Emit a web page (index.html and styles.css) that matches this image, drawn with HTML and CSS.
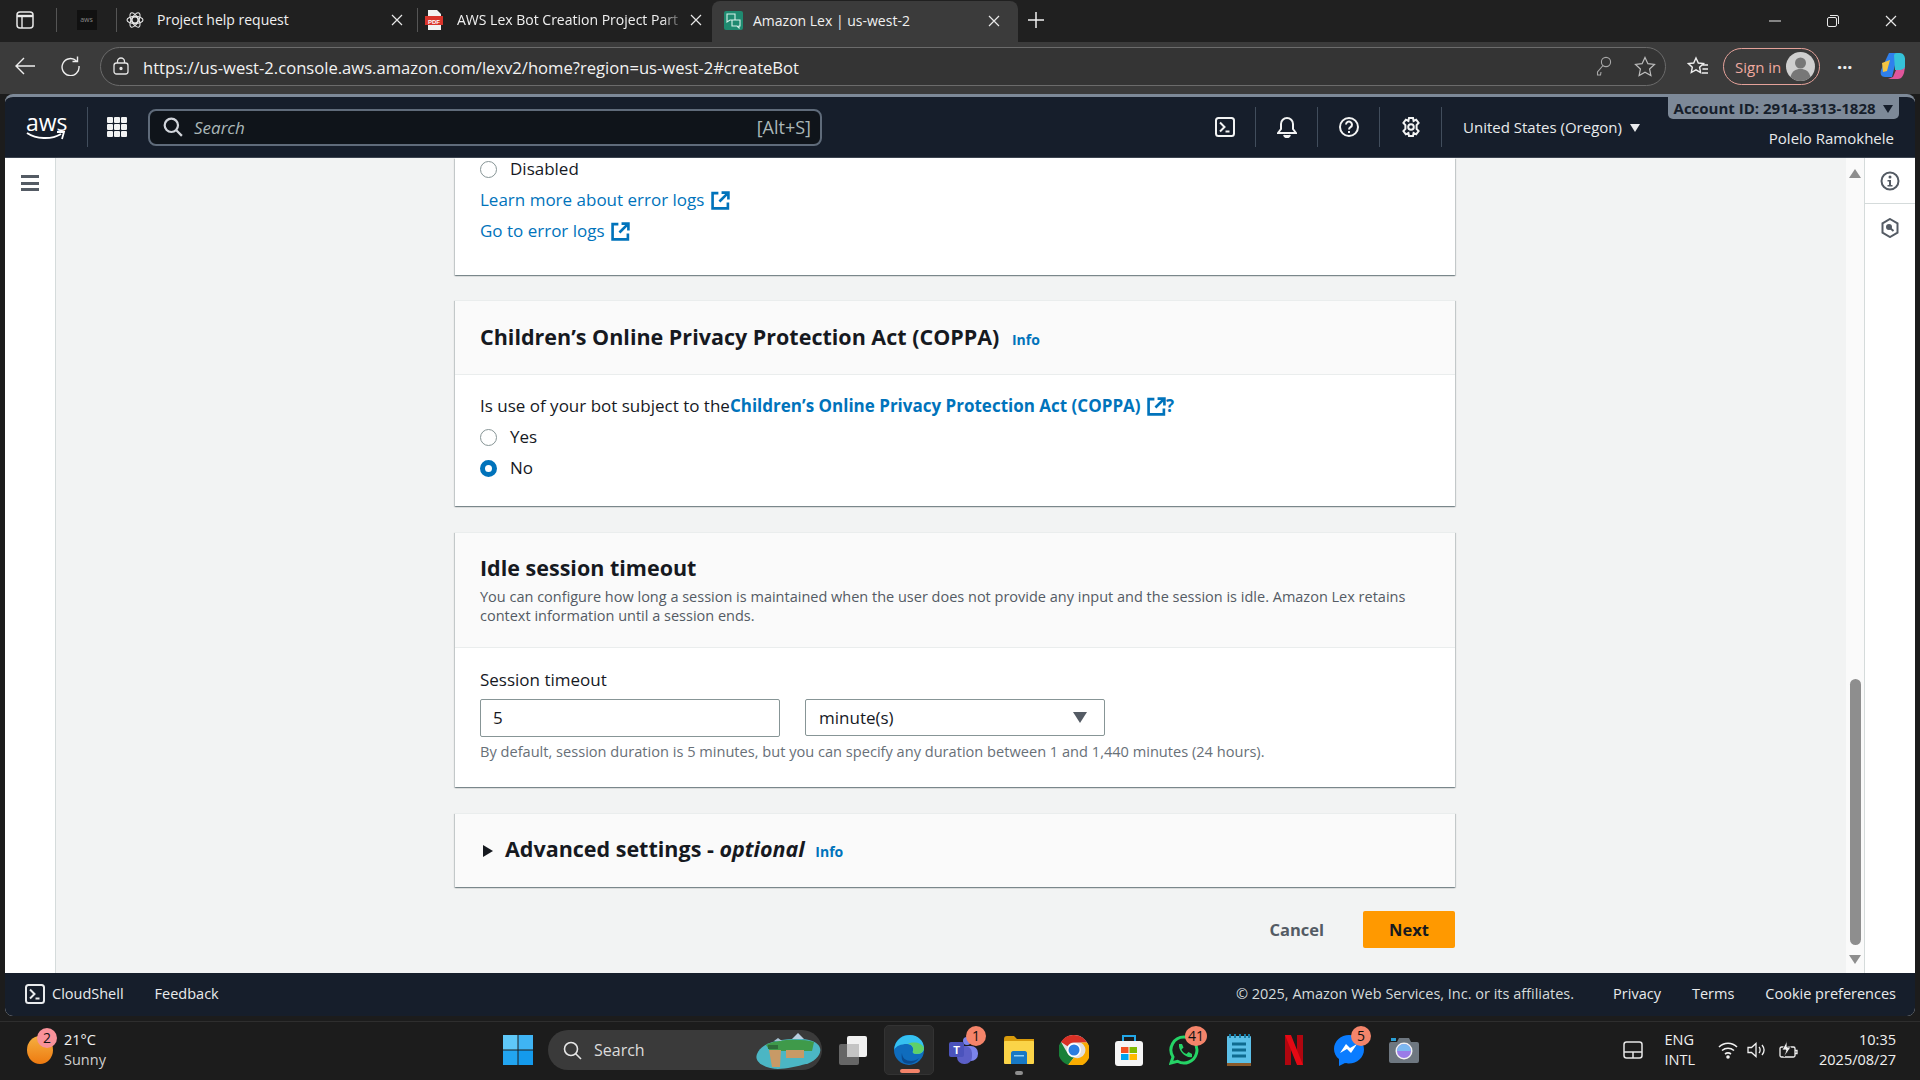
FILE: index.html
```html
<!DOCTYPE html>
<html lang="en">
<head>
  <meta charset="UTF-8" />
  <title>Amazon Lex | us-west-2</title>
  <link rel="stylesheet" href="styles.css">
</head>
<body>
  <svg class="defs" width="0" height="0">
    <symbol id="ext" viewBox="0 0 18 18">
      <path d="M7 2H1.500v14.500H16V11M10 1.500h6.500V8M16 2L8 10" fill="none" stroke="currentColor" stroke-width="2.500"/>
    </symbol>
    <symbol id="close" viewBox="0 0 12 12">
      <path d="M1 1l10 10M11 1L1 11" fill="none" stroke="currentColor" stroke-width="1.200"/>
    </symbol>
    <symbol id="shell" viewBox="0 0 20 20">
      <rect x="1" y="1" width="18" height="18" rx="2.500" fill="none" stroke="currentColor" stroke-width="2"/>
      <path d="M5 5.500L9.500 10 5 14.500M10.500 14.500h4" fill="none" stroke="currentColor" stroke-width="2"/>
    </symbol>
  </svg>

  <!-- Browser tabs -->
  <div class="tabbar">
    <svg class="side-icon" width="18" height="18" viewBox="0 0 18 18"><rect x="1" y="1" width="16" height="16" rx="3" fill="none" stroke="#e8e8e8" stroke-width="1.500"/><path d="M1 5h16" stroke="#e8e8e8" stroke-width="2.400"/><path d="M6 5v12" stroke="#e8e8e8" stroke-width="1.400"/></svg>
    <span class="tab-sep sep-a"></span>
    <div class="pinned"><span>aws</span></div>
    <span class="tab-sep"></span>
    <div class="tab tab-one">
      <svg width="18" height="18" viewBox="0 0 18 18" fill="none" stroke="#e3e3e3" stroke-width="1.100"><circle cx="9" cy="9" r="3"/><ellipse cx="9" cy="9" rx="8" ry="3.600"/><ellipse cx="9" cy="9" rx="8" ry="3.600" transform="rotate(60 9 9)"/><ellipse cx="9" cy="9" rx="8" ry="3.600" transform="rotate(120 9 9)"/></svg>
      <span class="tab-title">Project help request</span>
      <svg class="tab-x" width="12" height="12"><use href="#close"/></svg>
    </div>
    <span class="tab-sep"></span>
    <div class="tab tab-two">
      <svg width="18" height="20" viewBox="0 0 18 20"><path d="M3 0h9l4 4v16H3z" fill="#f2f2f2"/><rect x="0" y="6" width="18" height="9" fill="#d9342b"/><text x="9" y="13.500" class="pdf-text">PDF</text></svg>
      <span class="tab-title clip">AWS Lex Bot Creation Project Part</span>
      <svg class="tab-x" width="12" height="12"><use href="#close"/></svg>
    </div>
    <div class="tab tab-active">
      <svg width="19" height="19" viewBox="0 0 19 19"><rect width="19" height="19" rx="2" fill="#1f8a70"/><path d="M3 3h8v6H6l-3 2zM8 9h8v6h-1v2l-2-2H8z" fill="none" stroke="#d6f2ea" stroke-width="1.100"/></svg>
      <span class="tab-title">Amazon Lex | us-west-2</span>
      <svg class="tab-x" width="12" height="12"><use href="#close"/></svg>
    </div>
    <svg class="tab-plus" width="16" height="16" viewBox="0 0 16 16"><path d="M8 0v16M0 8h16" stroke="#f0f0f0" stroke-width="1.500"/></svg>
    <div class="win-btns">
      <svg width="12" height="12" viewBox="0 0 12 12"><path d="M0 6h12" stroke="#e8e8e8"/></svg>
      <svg width="12" height="12" viewBox="0 0 12 12" fill="none" stroke="#e8e8e8"><rect x=".5" y="2.500" width="9" height="9" rx="1.500"/><path d="M3 .5h7a1.500 1.500 0 0 1 1.500 1.500v7"/></svg>
      <svg width="12" height="12"><use href="#close" color="#e8e8e8"/></svg>
    </div>
  </div>

  <!-- Browser toolbar -->
  <div class="toolbar">
    <svg class="tb-back" width="20" height="18" viewBox="0 0 20 18"><path d="M9 1L1 9l8 8M1 9h19" fill="none" stroke="#eee" stroke-width="1.400"/></svg>
    <svg class="tb-reload" width="20" height="20" viewBox="0 0 20 20" fill="none" stroke="#eee" stroke-width="1.400"><path d="M16.500 5A8.500 8.500 0 1 0 19 10"/><path d="M17.500 0.500V5.500H12.500"/></svg>
    <div class="address">
      <svg width="16" height="18" viewBox="0 0 16 18" fill="none" stroke="#e4e4e4" stroke-width="1.300"><rect x="1" y="6" width="14" height="11" rx="2.500"/><path d="M4.500 6V4.500a3.500 3.500 0 0 1 7 0V6"/><circle cx="8" cy="11.500" r="1" fill="#e4e4e4"/></svg>
      <span class="url">https://us-west-2.console.aws.amazon.com/lexv2/home?region=us-west-2#createBot</span>
      <svg class="key" width="16" height="20" viewBox="0 0 16 20" fill="none" stroke="#a8a8a8" stroke-width="1.100"><circle cx="10" cy="6" r="4.600"/><path d="M7 9.500L1.500 16v3h3l.5-3"/></svg>
      <svg class="star" width="22" height="21" viewBox="0 0 22 21" fill="none" stroke="#bdbdbd" stroke-width="1.200"><path d="M11 1.500l2.900 6.200 6.600.8-4.900 4.500 1.300 6.600-5.900-3.300-5.900 3.300 1.300-6.600L1.500 8.500l6.600-.8z"/></svg>
    </div>
    <svg class="tb-fav" width="22" height="21" viewBox="0 0 22 21" fill="none" stroke="#eee" stroke-width="1.400"><path d="M9 2l2.300 5 5.200.6-3.900 3.600 1 5.300L9 13.800 4.300 16.500l1-5.300L1.500 7.600 6.700 7zM15 9h6M15.500 13h5.500M15 17h6"/></svg>
    <div class="signin">
      <span>Sign in</span>
      <svg width="29" height="29" viewBox="0 0 29 29"><circle cx="14.500" cy="14.500" r="14.500" fill="#cfcfcf"/><circle cx="14.500" cy="11" r="5.500" fill="#777"/><path d="M4.500 25c1.500-6 5-8 10-8s8.500 2 10 8a14.500 14.500 0 0 1-20 0z" fill="#777"/></svg>
    </div>
    <span class="dots">···</span>
    <svg class="copilot" width="26" height="28" viewBox="0 0 26 28">
      <path d="M9 1h9l-6 24H5C1 25 0 22 1 18z" fill="#2f80ed"/>
      <path d="M14 3c1-2 2-2 4-2h2c3 0 5 3 5 6v8c0 2-2 3-4 3h-6z" fill="#35c2d8"/>
      <path d="M2 11l8-3-3 11-4 1z" fill="#f4c542"/>
      <path d="M8 27h10c3 0 5-3 6-6l1-6c-1 2-3 3-5 3h-4l-3 7z" fill="#e0569b"/>
    </svg>
  </div>

  <div class="page">
    <!-- AWS console nav -->
    <header class="aws-nav">
      <div class="aws-logo">
        <span>aws</span>
        <svg width="40" height="10" viewBox="0 0 40 10"><path d="M1 2c9 6 24 7 34 1" fill="none" stroke="#fff" stroke-width="2"/><path d="M31 1h7l-2 7" fill="none" stroke="#fff" stroke-width="1.800"/></svg>
      </div>
      <span class="nav-div"></span>
      <div class="grid-icon"><i></i><i></i><i></i><i></i><i></i><i></i><i></i><i></i><i></i></div>
      <div class="search-box">
        <svg width="20" height="20" viewBox="0 0 18 18" fill="none" stroke="#d1d5db" stroke-width="2"><circle cx="7.500" cy="7.500" r="6"/><path d="M12 12l5 5"/></svg>
        <span class="search-ph">Search</span>
        <span class="search-key">[Alt+S]</span>
      </div>
      <div class="nav-icons">
        <div class="nav-cell"><svg width="20" height="20"><use href="#shell"/></svg></div>
        <div class="nav-cell"><svg width="20" height="22" viewBox="0 0 20 22" fill="none" stroke="currentColor" stroke-width="2"><path d="M1 17h18l-3-4V8a6 6 0 0 0-12 0v5z"/><path d="M7 19c1 3 5 3 6 0" fill="currentColor"/></svg></div>
        <div class="nav-cell"><svg width="20" height="20" viewBox="0 0 20 20" fill="none" stroke="currentColor" stroke-width="2"><circle cx="10" cy="10" r="9"/><path d="M7 7.500a3 3 0 1 1 4.500 2.700c-1 .6-1.500 1.200-1.500 2.300"/><path d="M10 14v2"/></svg></div>
        <div class="nav-cell"><svg width="20" height="20" viewBox="0 0 20 20" fill="none" stroke="currentColor" stroke-width="2"><path d="M8 1h4l.6 3 2.600-1.300 2.400 3.300-2 2.200v3.600l2 2.200-2.400 3.300-2.600-1.300-.6 3H8l-.6-3-2.600 1.300-2.400-3.300 2-2.200V8.200l-2-2.200 2.400-3.300L7.400 4z"/><circle cx="10" cy="10" r="2.800"/></svg></div>
      </div>
      <div class="region">United States (Oregon) <span class="caret"></span></div>
      <div class="account">
        <div class="account-id">Account ID: 2914-3313-1828 <span class="caret dark"></span></div>
        <div class="user-name">Polelo Ramokhele</div>
      </div>
    </header>

    <div class="workspace">
      <aside class="side-nav">
        <div class="burger"><i></i><i></i><i></i></div>
      </aside>

      <main class="main">
        <section class="card first-card">
          <div class="radio-row"><span class="radio"></span>Disabled</div>
          <div class="radio-row"><a class="link" href="#">Learn more about error logs <svg class="ext" width="19" height="19"><use href="#ext"/></svg></a></div>
          <div class="radio-row"><a class="link" href="#">Go to error logs <svg class="ext" width="19" height="19"><use href="#ext"/></svg></a></div>
        </section>

        <section class="card">
          <div class="card-head coppa-head">
            <h2>Children’s Online Privacy Protection Act (COPPA) <a class="info" href="#">Info</a></h2>
          </div>
          <div class="card-body coppa">
            <div class="radio-row">Is use of your bot subject to the<a class="link strong" href="#">Children’s Online Privacy Protection Act (COPPA) <svg class="ext" width="19" height="19"><use href="#ext"/></svg></a><b class="q">?</b></div>
            <div class="radio-row"><span class="radio"></span>Yes</div>
            <div class="radio-row"><span class="radio checked"></span>No</div>
          </div>
        </section>

        <section class="card">
          <div class="card-head">
            <h2>Idle session timeout</h2>
            <p class="desc">You can configure how long a session is maintained when the user does not provide any input and the session is idle. Amazon Lex retains context information until a session ends.</p>
          </div>
          <div class="card-body timeout">
            <label class="field-label">Session timeout</label>
            <div class="field-row">
              <div class="input">5</div>
              <div class="select">minute(s)<span class="select-caret"></span></div>
            </div>
            <p class="hint">By default, session duration is 5 minutes, but you can specify any duration between 1 and 1,440 minutes (24 hours).</p>
          </div>
        </section>

        <section class="card">
          <div class="card-head no-line">
            <h2><span class="expand"></span>Advanced settings - <em>optional</em> <a class="info adv-info" href="#">Info</a></h2>
          </div>
        </section>

        <div class="actions">
          <button class="btn-cancel">Cancel</button>
          <button class="btn-next">Next</button>
        </div>
      </main>

      <div class="scroll">
        <span class="arrow-up"></span>
        <span class="thumb"></span>
        <span class="arrow-down"></span>
      </div>

      <aside class="rail">
        <div class="rail-cell">
          <svg width="20" height="20" viewBox="0 0 20 20"><circle cx="10" cy="10" r="8.500" fill="none" stroke="#545b64" stroke-width="2"/><circle cx="10" cy="6" r="1.500" fill="#545b64"/><path d="M7.500 9H11v5h1.500v1.500h-5V14H9v-3.500H7.500z" fill="#545b64"/></svg>
        </div>
        <div class="rail-cell">
          <svg width="18" height="20" viewBox="0 0 18 20" fill="none" stroke="#545b64" stroke-width="2"><path d="M9 1l7.500 4.300v9.400L9 19l-7.500-4.300V5.300z"/><circle cx="8" cy="9" r="2" fill="#545b64"/><path d="M9 10l3.500 3"/></svg>
        </div>
      </aside>
    </div>

    <footer class="aws-foot">
      <svg width="20" height="20"><use href="#shell"/></svg>
      <span class="foot-shell">CloudShell</span>
      <span class="foot-feedback">Feedback</span>
      <span class="foot-copy">© 2025, Amazon Web Services, Inc. or its affiliates.</span>
      <span class="foot-link">Privacy</span>
      <span class="foot-link">Terms</span>
      <span class="foot-link">Cookie preferences</span>
    </footer>
  </div>

  <!-- Windows taskbar -->
  <div class="taskbar">
    <div class="weather">
      <div class="sun"><span class="badge pink">2</span></div>
      <div class="weather-text"><span>21°C</span><span class="dim">Sunny</span></div>
    </div>
    <div class="task">
      <svg width="30" height="30" viewBox="0 0 30 30"><path d="M0 0h14.500v14.500H0z" fill="#5fc8f8"/><path d="M15.500 0H30v14.500H15.500z" fill="#3fb4f4"/><path d="M0 15.500h14.500V30H0z" fill="#22a5f0"/><path d="M15.500 15.500H30V30H15.500z" fill="#149aec"/></svg>
    </div>
    <div class="task-search">
      <svg width="19" height="19" viewBox="0 0 19 19" fill="none" stroke="#e6e6e6" stroke-width="1.600"><circle cx="8" cy="8" r="6.500"/><path d="M12.500 12.500l5.500 5.500"/></svg>
      <span>Search</span>
      <svg class="island" width="68" height="40" viewBox="0 0 68 40"><path d="M3 24C8 12 24 10 38 9s26 2 28 9-6 14-14 16-20 5-28 5S-1 34 3 24z" fill="#4bb6c4"/><path d="M12 15c8-5 34-7 48-3l-2 9H16z" fill="#3f9a4a"/><path d="M15 20h12l-1 17h-8zM32 20h18v8H32z" fill="#c89a66"/><path d="M38 9l6-6 6 6z" fill="#b8cfe0"/><path d="M20 11l4-3 4 3z" fill="#a8c4d4"/><path d="M14 15h10v4H14z" fill="#2f6e3a"/></svg>
    </div>
    <div class="task">
      <svg width="32" height="32" viewBox="0 0 32 32"><rect x="10" y="2" width="20" height="21" rx="2" fill="#f1f1f1"/><rect x="2" y="10" width="20" height="21" rx="2" fill="#6f6f6f" opacity=".9"/><rect x="10" y="10" width="12" height="13" fill="#c4c4c4"/></svg>
    </div>
    <div class="task task-active">
      <svg width="32" height="32" viewBox="0 0 32 32"><circle cx="16" cy="16" r="15" fill="#0f6cbd"/><path d="M1 16C2 5 10 1 17 1c8 0 14 6 14 13 0 4-3 6-7 6-3 0-5-1-4-3 1-3-1-7-6-7C8 10 3 12 1 16z" fill="#35c1f1"/><path d="M31 14c0 3-3 6-7 6-3 0-5-1-4-3 1-3-1-7-5-7 6-3 14-1 16 4z" fill="#5fd068"/><path d="M9 19c0 5 4 8 9 8 3 0 6-1 8-3-3 5-9 7-14 5-3-1-4-6-3-10z" fill="#0a4a8f"/></svg>
      <span class="run-bar"></span>
    </div>
    <div class="task">
      <svg width="32" height="30" viewBox="0 0 32 30"><circle cx="19" cy="6" r="4" fill="#7b83eb"/><rect x="12" y="11" width="18" height="15" rx="7" fill="#7b83eb"/><rect x="9" y="11" width="15" height="18" rx="7" fill="#5b5fc7"/><rect x="1" y="7" width="15" height="15" rx="2" fill="#4b53bc"/><text x="8.500" y="19" class="teams-t">T</text></svg>
      <span class="badge">1</span>
    </div>
    <div class="task">
      <svg width="30" height="30" viewBox="0 0 30 30"><path d="M0 4c0-2 1-3 3-3h7l3 3h17v6H0z" fill="#d99b0b"/><rect y="6" width="30" height="23" rx="1" fill="#fbd448"/><path d="M7 18c0-1 1-2 2-2h12c1 0 2 1 2 2v11H7z" fill="#1778c4"/><rect x="10" y="20" width="10" height="1.500" fill="#8fd0f5"/></svg>
      <span class="run-dot"></span>
    </div>
    <div class="task">
      <svg width="30" height="30" viewBox="0 0 30 30"><circle cx="15" cy="15" r="15" fill="#e0e0e0"/><path d="M15 0a15 15 0 0 1 13 7.500H15a7.500 7.500 0 0 0-6.500 3.800L2 7A15 15 0 0 1 15 0z" fill="#d93025"/><path d="M2 7l6.500 11.300A7.500 7.500 0 0 0 15 22.500L9 30A15 15 0 0 1 2 7z" fill="#188038"/><path d="M28 7.500A15 15 0 0 1 9 30l6-7.500a7.500 7.500 0 0 0 6.500-15z" fill="#f9ab00"/><circle cx="15" cy="15" r="7" fill="#fff"/><circle cx="15" cy="15" r="5.500" fill="#2a7de1"/></svg>
    </div>
    <div class="task">
      <svg width="30" height="32" viewBox="0 0 30 32"><path d="M9 8V2h12v6" fill="none" stroke="#22a7e8" stroke-width="2"/><rect x="1" y="7" width="28" height="25" rx="3" fill="#f5f5f5"/><rect x="7" y="13" width="7.500" height="6" fill="#f25022"/><rect x="15.500" y="13" width="7.500" height="6" fill="#7fba00"/><rect x="7" y="20" width="7.500" height="6" fill="#00a4ef"/><rect x="15.500" y="20" width="7.500" height="6" fill="#ffb900"/></svg>
    </div>
    <div class="task">
      <svg width="30" height="30" viewBox="0 0 30 30"><path d="M15 2a13 13 0 0 0-11 20L2 28l6.500-1.700A13 13 0 1 0 15 2z" fill="none" stroke="#25d366" stroke-width="3"/><path d="M10 9l3 0 1.500 3.500-2 2c1 2 2.500 3.500 5 4.500l2-2L23 19v3c-6 1.500-14-6-13-13z" fill="#25d366"/></svg>
      <span class="badge wide">41</span>
    </div>
    <div class="task">
      <svg width="26" height="32" viewBox="0 0 26 32"><rect x="1" y="2" width="24" height="30" rx="1" fill="#5cc0e8"/><rect x="1" y="29" width="24" height="3" fill="#8a5a2b"/><path d="M4 0v4M9 0v4M14 0v4M19 0v4M23 0v4" stroke="#1a7fa8" stroke-width="2"/><path d="M6 10h14M6 16h14M6 22h14" stroke="#0f6b90" stroke-width="3"/></svg>
    </div>
    <div class="task">
      <svg width="18" height="30" viewBox="0 0 18 30"><path d="M0 0h6v30l-6 0z" fill="#b0060f"/><path d="M12 0h6v30h-6z" fill="#b0060f"/><path d="M0 0h6l12 30h-6z" fill="#e50914"/></svg>
    </div>
    <div class="task">
      <svg width="30" height="31" viewBox="0 0 30 31"><path d="M15 0C7 0 0 6 0 14c0 4 2 8 5 10v7l6-3c1 .3 3 .4 4 .4 8 0 15-6 15-14S23 0 15 0z" fill="#0a7cff"/><path d="M6 18l6-9 4 4 7-4-6 9-4-4z" fill="#fff"/></svg>
      <span class="badge">5</span>
    </div>
    <div class="task">
      <svg width="30" height="26" viewBox="0 0 30 26"><path d="M2 5h6l2-4h10l2 4h6a2 2 0 0 1 2 2v17a2 2 0 0 1-2 2H2a2 2 0 0 1-2-2V7a2 2 0 0 1 2-2z" fill="#6e7780"/><rect x="2" y="1" width="5" height="3" fill="#2a9fd6"/><circle cx="15" cy="14" r="8.500" fill="#f2f2f2"/><circle cx="15" cy="14" r="7" fill="#9a7be8"/><path d="M15 7a7 7 0 0 1 7 7H8a7 7 0 0 1 7-7z" fill="#7cb8f0"/></svg>
    </div>
    <div class="tray">
      <svg width="20" height="18" viewBox="0 0 20 18" fill="none" stroke="#e6e6e6" stroke-width="1.500"><rect x="1" y="1" width="18" height="16" rx="2.500"/><path d="M1 11h18M10 11v6"/></svg>
      <div class="lang"><span>ENG</span><span>INTL</span></div>
      <svg width="20" height="18" viewBox="0 0 20 18" fill="none" stroke="#f0f0f0" stroke-width="1.600"><path d="M1 6c5-5 13-5 18 0M4 9.500c3.500-3 8.500-3 12 0M7 13c2-1.500 4-1.500 6 0"/><circle cx="10" cy="16" r="1" fill="#f0f0f0"/></svg>
      <svg width="20" height="18" viewBox="0 0 20 18" fill="none" stroke="#f0f0f0" stroke-width="1.300"><path d="M1 6.500h3.500L9 2.500v13l-4.500-4H1zM12 6c1.500 1.500 1.500 4.500 0 6M15 4c2.500 3 2.500 7 0 10"/></svg>
      <svg width="22" height="20" viewBox="0 0 22 20" fill="none" stroke="#f0f0f0" stroke-width="1.300"><rect x="4" y="7" width="15" height="10" rx="1.500"/><path d="M19 10.500h2v3h-2"/><path d="M11 1L6 10h4l-2 7 7-10h-4z" fill="#f0f0f0" stroke="#1c1c1c" stroke-width=".8"/></svg>
      <div class="clock"><span>10:35</span><span>2025/08/27</span></div>
    </div>
  </div>
</body>
</html>
```

FILE: styles.css
```css
* {
  box-sizing: border-box;
}

body {
  margin: 0;
  width: 1920px;
  height: 1080px;
  overflow: hidden;
  background: #1c1c1c;
  font-family: "Open Sans", sans-serif;
  color: #16191f;
}

.defs {
  display: block;
  height: 0;
}

/* browser tabs */
.tabbar {
  height: 42px;
  background: #202020;
  display: flex;
  align-items: center;
  color: #eee;
  font-size: 14px;
}

.side-icon {
  margin-left: 16px;
  margin-bottom: 3px;
}

.tab-sep {
  width: 1px;
  height: 24px;
  background: #555;
  margin-bottom: 3px;
}

.sep-a {
  margin-left: 22px;
}

.pinned {
  width: 59px;
  display: flex;
  justify-content: center;
  margin-bottom: 3px;
}

.pinned span {
  width: 20px;
  height: 20px;
  background: #111;
  color: #888;
  font-size: 7px;
  line-height: 20px;
  text-align: center;
}

.tab {
  height: 100%;
  display: flex;
  align-items: center;
  position: relative;
  color: #f0f0f0;
  padding-bottom: 3px;
}

.tab-one {
  width: 300px;
  padding-left: 9px;
}

.tab-two {
  width: 294px;
  padding-left: 7px;
}

.tab-active {
  width: 306px;
  padding-left: 12px;
  background: #3b3b3b;
  border-radius: 8px 8px 0 0;
  margin-top: 2px;
  padding-bottom: 3px;
}

.tab-title {
  margin-left: 13px;
  white-space: nowrap;
}

.tab-active .tab-title {
  margin-left: 10px;
}

.tab-two .tab-title {
  margin-left: 14px;
  width: 228px;
  overflow: hidden;
  -webkit-mask-image: linear-gradient(to right, #000 90%, transparent);
  mask-image: linear-gradient(to right, #000 90%, transparent);
}

.tab-x {
  color: #e8e8e8;
  margin-left: auto;
  margin-right: 14px;
}

.tab-two .tab-x {
  margin-right: 10px;
}

.tab-active .tab-x {
  margin-right: 18px;
}

.tab-plus {
  margin-left: 10px;
  margin-bottom: 3px;
}

.pdf-text {
  font: bold 6px "Liberation Sans", sans-serif;
  fill: #fff;
  text-anchor: middle;
}

.win-btns {
  margin-left: auto;
  display: flex;
  gap: 46px;
  padding-right: 23px;
}

/* browser toolbar */
.toolbar {
  height: 52px;
  background: #3b3b3b;
  display: flex;
  align-items: center;
  color: #eee;
  padding-bottom: 4px;
}

.tb-back {
  margin-left: 15px;
}

.tb-reload {
  margin-left: 25px;
}

.address {
  margin-left: 20px;
  width: 1566px;
  height: 39px;
  border: 1px solid #6b6b6b;
  border-radius: 20px;
  background: #343434;
  display: flex;
  align-items: center;
  padding: 0 9px 0 12px;
}

.url {
  margin-left: 14px;
  margin-top: 2px;
  font-size: 16.6px;
  color: #f2f2f2;
  white-space: nowrap;
}

.key {
  margin-left: auto;
}

.star {
  margin-left: 22px;
}

.tb-fav {
  margin-left: 21px;
}

.signin {
  margin-left: 14px;
  width: 97px;
  height: 37px;
  border: 1px solid #e5a29a;
  border-radius: 19px;
  display: flex;
  align-items: center;
  justify-content: space-between;
  padding: 0 4px 0 11px;
  color: #f0aaa0;
  font-size: 15px;
}

.signin span {
  margin-top: 1px;
}

.dots {
  margin-left: 17px;
  margin-top: 1px;
  font-size: 18px;
  font-weight: 700;
  width: 20px;
}

.copilot {
  margin-left: 23px;
}

/* aws console frame */
.page {
  margin: 0 5px;
  height: 922px;
  display: flex;
  flex-direction: column;
  border-radius: 8px;
  overflow: hidden;
  background: #fff;
  border-top: 3px solid #7d8998;
}

.aws-nav {
  height: 61px;
  flex: none;
  background: #161e2b;
  border-bottom: 1px solid #3c4450;
  display: flex;
  align-items: center;
  color: #e9ebed;
  font-size: 15px;
}

.aws-logo {
  margin-left: 21px;
  width: 40px;
  color: #fff;
  font-size: 23px;
  line-height: 20px;
  text-align: center;
  height: 30px;
}

.aws-logo svg {
  display: block;
  margin-top: -1px;
}

.nav-div {
  width: 1px;
  height: 40px;
  background: #414d5c;
  margin-left: 21px;
}

.grid-icon {
  width: 20px;
  height: 20px;
  margin-left: 19px;
  display: grid;
  grid-template-columns: repeat(3, 6px);
  grid-auto-rows: 6px;
  gap: 1px;
}

.grid-icon i {
  background: #f2f3f3;
  border-radius: 1px;
}

.search-box {
  margin-left: 21px;
  width: 674px;
  height: 37px;
  background: #0f141a;
  border: 2px solid #5f6b7a;
  border-radius: 8px;
  display: flex;
  align-items: center;
  padding: 0 9px 0 13px;
  color: #aab7b8;
  font-size: 17px;
}

.search-ph {
  margin-left: 11px;
  font-style: italic;
}

.search-key {
  margin-left: auto;
  font-size: 18px;
}

.nav-icons {
  margin-left: 372px;
  display: flex;
}

.nav-cell {
  width: 62px;
  height: 40px;
  display: flex;
  align-items: center;
  justify-content: center;
  border-right: 1px solid #414d5c;
  color: #f2f3f3;
}

.region {
  width: 226px;
  padding-left: 21px;
  white-space: nowrap;
}

.caret {
  display: inline-block;
  margin-left: 4px;
  border-left: 5px solid transparent;
  border-right: 5px solid transparent;
  border-top: 8px solid #e9ebed;
  vertical-align: 1px;
}

.caret.dark {
  border-top-color: #161e2b;
}

.account {
  width: 231px;
  align-self: stretch;
  display: flex;
  flex-direction: column;
  align-items: flex-end;
}

.account-id {
  width: 100%;
  height: 22px;
  line-height: 22px;
  background: #7d8998;
  border-radius: 0 0 5px 5px;
  color: #161e2b;
  font-weight: 700;
  text-align: center;
  white-space: nowrap;
}

.user-name {
  margin-top: 8px;
  padding-right: 5px;
  line-height: 22px;
  white-space: nowrap;
}

.workspace {
  flex: 1;
  min-height: 0;
  display: flex;
}

.side-nav {
  width: 51px;
  flex: none;
  background: #fff;
  border-right: 1px solid #d5dbdb;
  box-shadow: 1px 0 2px rgba(0, 0, 0, 0.08);
}

.burger {
  margin: 17px 0 0 16px;
  width: 18px;
  display: flex;
  flex-direction: column;
  gap: 3.5px;
}

.burger i {
  height: 3px;
  background: #545b64;
}

/* main column */
.main {
  width: 1790px;
  flex: none;
  background: #f2f3f3;
  padding-left: 399px;
  overflow: hidden;
}

.card {
  width: 1000px;
  background: #fff;
  margin-bottom: 26px;
  box-shadow: 0 1px 1px 0 rgba(0, 28, 36, 0.3), 1px 1px 1px 0 rgba(0, 28, 36, 0.15), -1px 1px 1px 0 rgba(0, 28, 36, 0.15);
  border-top: 1px solid #eaeded;
}

.first-card {
  height: 117px;
  padding: 0 25px;
  border-top: 0;
  margin-bottom: 25px;
}

.card-head {
  background: #fafafa;
  padding: 21px 25px 22px;
  border-bottom: 1px solid #eaeded;
}

.coppa-head {
  padding: 22px 25px 20px;
}

.card-head.no-line {
  border-bottom: 0;
  padding-bottom: 21px;
}

.card-head h2 {
  margin: 0;
  font-size: 21.5px;
  line-height: 28px;
  font-weight: 700;
  white-space: nowrap;
}

.desc {
  margin: 5px 0 0;
  font-size: 14.5px;
  line-height: 19px;
  color: #545b64;
}

.card-body {
  padding: 20px 25px 25px;
}

.coppa {
  padding-bottom: 27px;
}

.timeout {
  padding: 21px 25px 26px;
}

.radio-row {
  height: 22px;
  line-height: 22px;
  margin-bottom: 9px;
  font-size: 17px;
  display: flex;
  align-items: center;
  white-space: pre;
}

.first-card .radio-row:last-child,
.coppa .radio-row:last-child {
  margin-bottom: 0;
}

.radio {
  width: 17px;
  height: 17px;
  border-radius: 50%;
  border: 1.5px solid #879596;
  background: #fff;
  margin-right: 13px;
}

.radio.checked {
  border: 5px solid #0073bb;
}

.link {
  color: #0073bb;
  text-decoration: none;
  display: inline-flex;
  align-items: center;
}

.link.strong,
.q {
  font-weight: 700;
  color: #0073bb;
}

.ext {
  margin-left: 2px;
  color: #0073bb;
}

.info {
  color: #0073bb;
  font-size: 14px;
  font-weight: 700;
  text-decoration: none;
  margin-left: 7px;
}

.adv-info {
  margin-left: 5px;
}

.field-label {
  display: block;
  font-size: 17px;
  line-height: 22px;
}

.field-row {
  margin-top: 8px;
  display: flex;
  gap: 25px;
}

.input,
.select {
  width: 300px;
  height: 38px;
  border: 1px solid #879596;
  border-radius: 2px;
  background: #fff;
  padding: 0 13px;
  font-size: 17px;
  line-height: 36px;
}

.input {
  padding-left: 12px;
}

.select {
  height: 37px;
  line-height: 33px;
  display: flex;
  align-items: center;
  justify-content: space-between;
  padding-right: 17px;
}

.select-caret {
  border-left: 7px solid transparent;
  border-right: 7px solid transparent;
  border-top: 11px solid #545b64;
}

.hint {
  margin: 5px 0 0;
  font-size: 14.6px;
  line-height: 19px;
  color: #687078;
}

.expand {
  display: inline-block;
  border-top: 6.5px solid transparent;
  border-bottom: 6.5px solid transparent;
  border-left: 10px solid #16191f;
  margin: 0 12px 0 3px;
}

.card-head em {
  font-style: italic;
}

.actions {
  margin-top: -2px;
  width: 1000px;
  display: flex;
  justify-content: flex-end;
  align-items: center;
  gap: 39px;
}

.btn-cancel,
.btn-next {
  font-family: inherit;
  font-size: 16.5px;
  font-weight: 700;
  border: 0;
  padding: 0 0 1px;
}

.btn-cancel {
  background: none;
  color: #545b64;
}

.btn-next {
  width: 92px;
  height: 37px;
  background: #ff9900;
  border-radius: 2px;
  color: #16191f;
}

/* scrollbar and right rail */
.scroll {
  width: 18px;
  flex: none;
  background: #fafafa;
  display: flex;
  flex-direction: column;
  align-items: center;
  padding: 11px 0 9px;
}

.arrow-up {
  border-left: 6.5px solid transparent;
  border-right: 6.5px solid transparent;
  border-bottom: 9px solid #8e8e8e;
}

.thumb {
  width: 11px;
  height: 266px;
  background: #8e8e8e;
  border-radius: 6px;
  margin-top: auto;
  margin-left: 1px;
}

.arrow-down {
  margin-top: 10px;
  border-left: 6.5px solid transparent;
  border-right: 6.5px solid transparent;
  border-top: 9px solid #8e8e8e;
}

.rail {
  flex: 1;
  background: #fff;
  border-left: 1px solid #d5dbdb;
}

.rail-cell {
  height: 46px;
  display: flex;
  align-items: center;
  justify-content: center;
  padding-top: 1px;
  border-bottom: 1px solid #d5dbdb;
}

.rail-cell:last-child {
  border-bottom: 0;
}

.aws-foot {
  height: 43px;
  flex: none;
  background: #161e2b;
  display: flex;
  align-items: center;
  padding: 0 19px 2px 20px;
  color: #e9ebed;
  font-size: 14.5px;
}

.foot-shell {
  margin-left: 7px;
}

.foot-feedback {
  margin-left: 31px;
}

.foot-copy {
  margin-left: auto;
  margin-right: 8px;
  color: #d5dbdb;
}

.foot-link {
  margin-left: 31px;
}

/* windows taskbar */
.taskbar {
  margin-top: 5px;
  height: 59px;
  background: #1c1c1c;
  border-top: 1px solid #2e2e2e;
  display: flex;
  align-items: center;
  gap: 5px;
  color: #f0f0f0;
  font-size: 14.5px;
  padding-bottom: 2px;
}

.weather {
  width: 488px;
  display: flex;
  align-items: center;
  padding-left: 27px;
}

.sun {
  width: 26px;
  height: 28px;
  border-radius: 50%;
  background: linear-gradient(#f5b041, #ee7a10);
  position: relative;
}

.weather-text {
  margin-left: 11px;
  display: flex;
  flex-direction: column;
  line-height: 20px;
}

.dim {
  color: #cfcfcf;
}

.task {
  width: 50px;
  height: 50px;
  flex: none;
  display: flex;
  align-items: center;
  justify-content: center;
  position: relative;
}

.task-active {
  background: #2a2a2a;
  border: 1px solid #333;
  border-radius: 5px;
  margin-left: 1px;
}

.task-search {
  width: 274px;
  height: 40px;
  background: #3a3a3a;
  border-radius: 20px;
  display: flex;
  align-items: center;
  padding-left: 15px;
  font-size: 16px;
  color: #dcdcdc;
  overflow: hidden;
  flex: none;
  margin-right: 1px;
}

.task-search span {
  margin-left: 12px;
}

.island {
  margin-left: auto;
}

.teams-t {
  font: bold 11px "Liberation Sans", sans-serif;
  fill: #fff;
  text-anchor: middle;
}

.badge {
  position: absolute;
  top: 1px;
  right: 3px;
  width: 20px;
  height: 20px;
  border-radius: 50%;
  background: #f4846a;
  color: #111;
  font-size: 14px;
  line-height: 20px;
  text-align: center;
}

.badge.wide {
  width: 22px;
  right: 2px;
}

.badge.pink {
  background: #f8929a;
  top: -8px;
  right: -4px;
  width: 20px;
}

.run-bar {
  position: absolute;
  left: 15px;
  bottom: 1px;
  width: 20px;
  height: 4px;
  border-radius: 2px;
  background: #f4846a;
}

.run-dot {
  position: absolute;
  left: 21px;
  bottom: 0;
  width: 8px;
  height: 4px;
  border-radius: 2px;
  background: #8e8e8e;
}

.tray {
  margin-left: auto;
  padding-right: 24px;
  display: flex;
  align-items: center;
  gap: 9px;
}

.lang,
.clock {
  display: flex;
  flex-direction: column;
  line-height: 20px;
}

.lang {
  margin: 0 14px 0 13px;
}

.clock {
  margin-left: 12px;
  align-items: flex-end;
}
```
